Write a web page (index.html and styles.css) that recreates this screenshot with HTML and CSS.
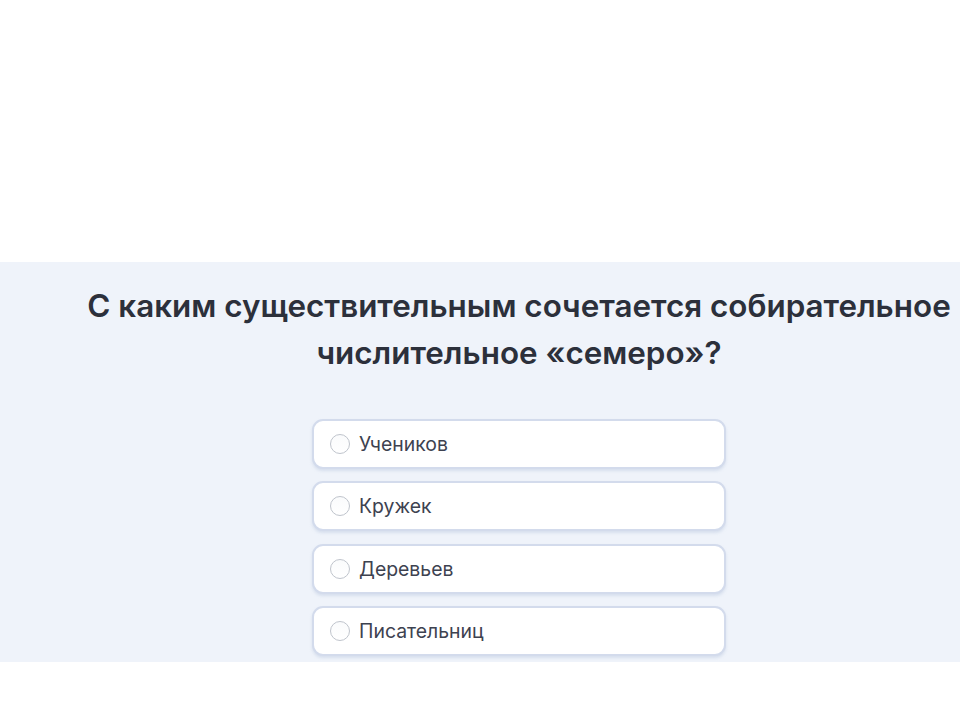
FILE: index.html
```html
<!DOCTYPE html>
<html lang="ru">
<head>
<meta charset="utf-8">
<link rel="stylesheet" href="styles.css">
</head>
<body>
<div class="top"></div>
<section class="band">
  <div class="column">
    <h1 class="question">С каким существительным сочетается собирательное числительное «семеро»?</h1>
    <ul class="options">
      <li class="option"><span class="radio"></span><span class="label">Учеников</span></li>
      <li class="option"><span class="radio"></span><span class="label">Кружек</span></li>
      <li class="option"><span class="radio"></span><span class="label">Деревьев</span></li>
      <li class="option"><span class="radio"></span><span class="label">Писательниц</span></li>
    </ul>
  </div>
</section>
</body>
</html>
```
FILE: styles.css
```css
* { box-sizing: border-box; }
html, body { margin: 0; padding: 0; background: #ffffff; }
body { font-family: Inter, "Noto Sans", sans-serif; width: 960px; height: 720px; overflow: hidden; }
.top { height: 262px; }
.band { background: #eff3fa; height: 400px; }
.column { margin-left: 78px; width: 882px; padding-top: 21px; display: flex; flex-direction: column; align-items: center; }
.question { margin: 0; font-size: 31.4px; line-height: 47px; font-weight: 600; color: #2c303b; text-align: center; }
.options { list-style: none; margin: 42px 0 0; padding: 0; display: flex; flex-direction: column; gap: 12.4px; width: 414px; }
.option { height: 50px; background: #fff; border: 2px solid #d3dbec; border-radius: 11px; box-shadow: 0 2px 3px rgba(170,185,215,0.35); display: flex; align-items: center; padding-left: 16px; }
.radio { width: 20px; height: 20px; border-radius: 50%; border: 1px solid #bfc4cc; background: linear-gradient(#fafbfc, #ffffff); flex: none; }
.label { margin-left: 9px; font-size: 19.4px; color: #3d4250; }
```
